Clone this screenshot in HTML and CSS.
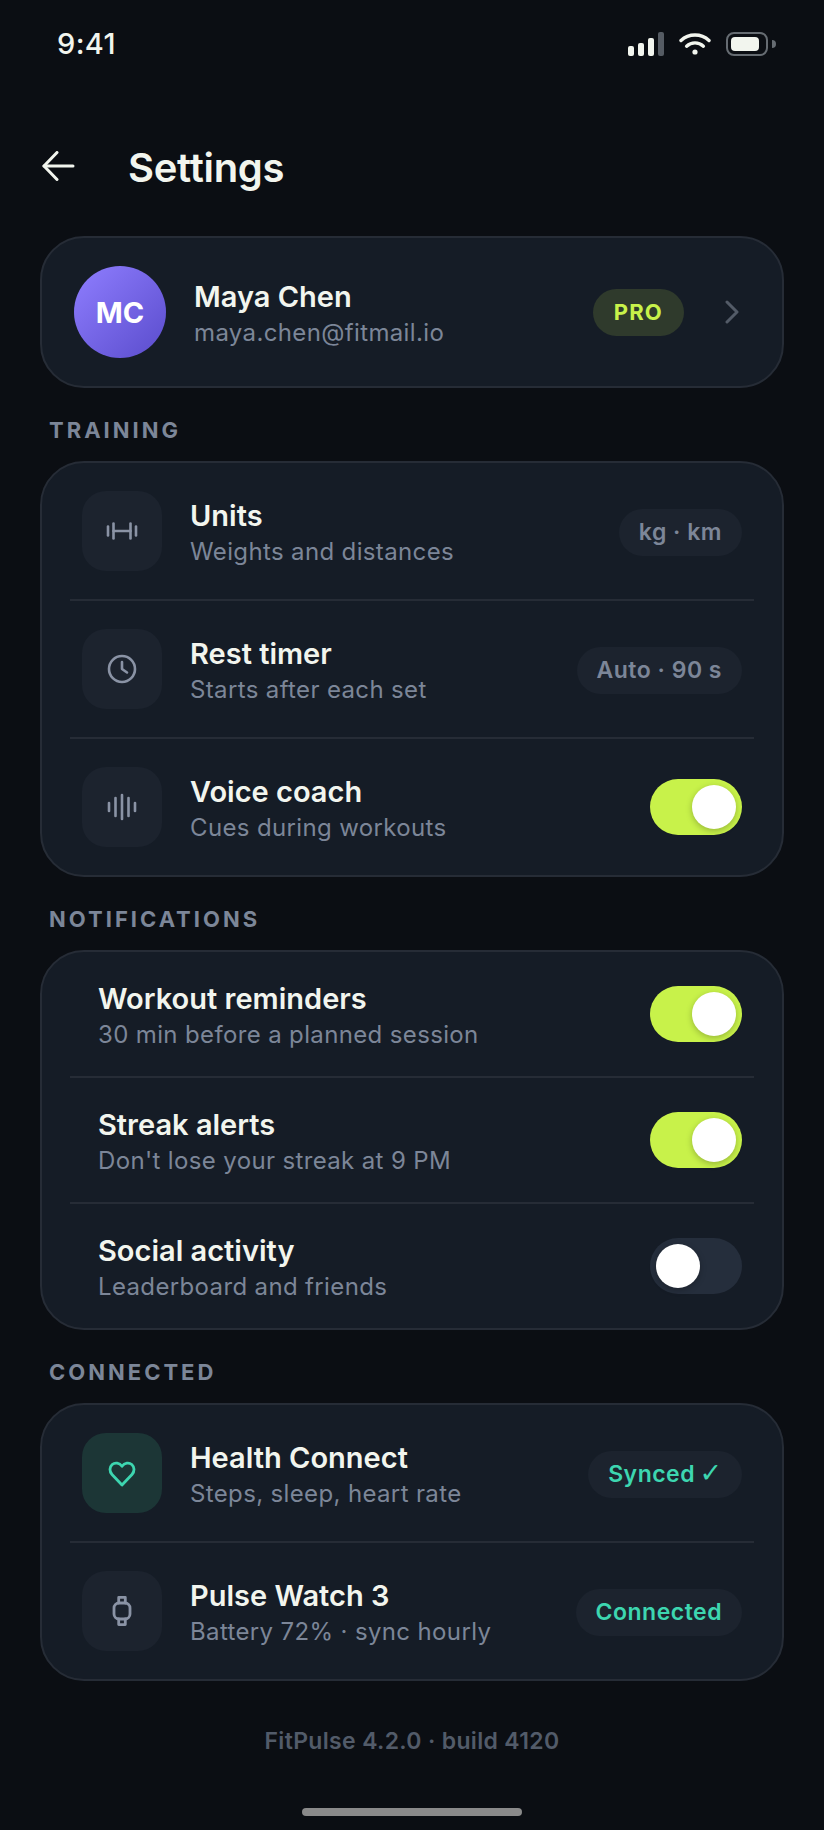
FILE: index.html
```html
<!DOCTYPE html>
<html lang="en">
<head>
    <meta charset="UTF-8">
    <meta name="viewport" content="width=device-width, initial-scale=1.0">
    <title>Settings</title>
    <link rel="stylesheet" href="styles.css">
</head>
<body>
    <div class="screen">
        <!-- Status bar -->
        <div class="status-bar">
            <span class="time">9:41</span>
            <div class="status-icons">
                <div class="signal">
                    <span class="bar bar-1"></span>
                    <span class="bar bar-2"></span>
                    <span class="bar bar-3"></span>
                    <span class="bar bar-4"></span>
                </div>
                <svg class="wifi" width="32" height="24" viewBox="0 0 32 24" fill="none" stroke="#f2f5ee" stroke-width="3.4" stroke-linecap="round">
                    <path d="M2 8.500C9.800 1.200 22.200 1.200 30 8.500"/>
                    <path d="M7.600 14.200C12.400 9.800 19.600 9.800 24.400 14.200"/>
                    <circle cx="16" cy="20" r="2.600" fill="#f2f5ee" stroke="none"/>
                </svg>
                <div class="battery"><span class="battery-fill"></span></div>
                <span class="battery-nub"></span>
            </div>
        </div>

        <!-- Header -->
        <div class="header">
            <svg class="back" width="34" height="30" viewBox="0 0 34 30" fill="none" stroke="#f2f5ee" stroke-width="3" stroke-linecap="round" stroke-linejoin="round">
                <path d="M31 15H2"/>
                <path d="M15 1.500L2 15l13 13.500"/>
            </svg>
            <h1>Settings</h1>
        </div>

        <!-- Profile -->
        <div class="card profile">
            <div class="avatar">MC</div>
            <div class="row-text">
                <div class="row-title">Maya Chen</div>
                <div class="row-sub">maya.chen@fitmail.io</div>
            </div>
            <span class="pro-badge">PRO</span>
            <svg class="chevron" width="14" height="24" viewBox="0 0 14 24" fill="none" stroke="#535b67" stroke-width="3" stroke-linecap="round" stroke-linejoin="round">
                <path d="M2 2l10 10L2 22"/>
            </svg>
        </div>

        <div class="section-label">TRAINING</div>
        <div class="card list">
            <div class="row tall">
                <div class="icon-box">
                    <svg width="32" height="32" viewBox="0 0 32 32" fill="none" stroke="#8a93a5" stroke-width="2.600" stroke-linecap="round">
                        <path d="M2 11.500v9"/>
                        <path d="M7.500 8.500v15"/>
                        <path d="M7.500 16h17"/>
                        <path d="M24.500 8.500v15"/>
                        <path d="M30 11.500v9"/>
                    </svg>
                </div>
                <div class="row-text">
                    <div class="row-title">Units</div>
                    <div class="row-sub">Weights and distances</div>
                </div>
                <span class="pill">kg · km</span>
            </div>
            <div class="row tall">
                <div class="icon-box">
                    <svg width="32" height="32" viewBox="0 0 32 32" fill="none" stroke="#8a93a5" stroke-width="2.600" stroke-linecap="round" stroke-linejoin="round">
                        <circle cx="16" cy="16" r="13"/>
                        <path d="M16 9v7l5 3.500"/>
                    </svg>
                </div>
                <div class="row-text">
                    <div class="row-title">Rest timer</div>
                    <div class="row-sub">Starts after each set</div>
                </div>
                <span class="pill">Auto · 90 s</span>
            </div>
            <div class="row tall">
                <div class="icon-box">
                    <svg width="32" height="32" viewBox="0 0 32 32" fill="none" stroke="#8a93a5" stroke-width="2.600" stroke-linecap="round">
                        <path d="M3 12v8"/>
                        <path d="M9.500 7v18"/>
                        <path d="M16 4v24"/>
                        <path d="M22.500 7v18"/>
                        <path d="M29 12v8"/>
                    </svg>
                </div>
                <div class="row-text">
                    <div class="row-title">Voice coach</div>
                    <div class="row-sub">Cues during workouts</div>
                </div>
                <div class="toggle on"><span class="knob"></span></div>
            </div>
        </div>

        <div class="section-label">NOTIFICATIONS</div>
        <div class="card list">
            <div class="row short">
                <div class="row-text">
                    <div class="row-title">Workout reminders</div>
                    <div class="row-sub">30 min before a planned session</div>
                </div>
                <div class="toggle on"><span class="knob"></span></div>
            </div>
            <div class="row short">
                <div class="row-text">
                    <div class="row-title">Streak alerts</div>
                    <div class="row-sub">Don't lose your streak at 9 PM</div>
                </div>
                <div class="toggle on"><span class="knob"></span></div>
            </div>
            <div class="row short">
                <div class="row-text">
                    <div class="row-title">Social activity</div>
                    <div class="row-sub">Leaderboard and friends</div>
                </div>
                <div class="toggle"><span class="knob"></span></div>
            </div>
        </div>

        <div class="section-label">CONNECTED</div>
        <div class="card list">
            <div class="row tall">
                <div class="icon-box teal">
                    <svg width="32" height="32" viewBox="0 0 32 32" fill="none" stroke="#3dd6b0" stroke-width="2.800" stroke-linecap="round" stroke-linejoin="round">
                        <path d="M16 28L6 17.500C3.200 14.500 3.400 10 6.200 7.500C9 5.100 13.400 5.700 16 9.300C18.600 5.700 23 5.100 25.800 7.500C28.600 10 28.800 14.500 26 17.500L16 28Z"/>
                    </svg>
                </div>
                <div class="row-text">
                    <div class="row-title">Health Connect</div>
                    <div class="row-sub">Steps, sleep, heart rate</div>
                </div>
                <span class="pill green">Synced <span class="check">✓</span></span>
            </div>
            <div class="row tall">
                <div class="icon-box">
                    <svg width="32" height="32" viewBox="0 0 32 32" fill="none" stroke="#8a93a5" stroke-width="2.800" stroke-linecap="round" stroke-linejoin="round">
                        <rect x="8" y="8" width="16" height="16" rx="5"/>
                        <path d="M12.700 8V2.400h6.600V8"/>
                        <path d="M12.700 24v5.600h6.600V24"/>
                    </svg>
                </div>
                <div class="row-text">
                    <div class="row-title">Pulse Watch 3</div>
                    <div class="row-sub">Battery 72% · sync hourly</div>
                </div>
                <span class="pill green">Connected</span>
            </div>
        </div>

        <div class="footer">FitPulse 4.2.0 · build 4120</div>
        <div class="home-indicator"></div>
    </div>
</body>
</html>
```

FILE: styles.css
```css
* {
    box-sizing: border-box;
}

body {
    margin: 0;
    background-color: #0b0e13;
    color: #f2f5ee;
    font-family: Inter, "Liberation Sans", sans-serif;
}

.screen {
    width: 824px;
    height: 1830px;
    padding: 0 40px;
    overflow: hidden;
}

/* Status bar */
.status-bar {
    display: flex;
    justify-content: space-between;
    align-items: center;
    height: 88px;
    padding: 0 8px 0 17px;
}

.time {
    font-size: 29px;
    font-weight: 500;
    letter-spacing: 0.4px;
    line-height: 90px;
}

.status-icons {
    display: flex;
    align-items: center;
}

.signal {
    display: flex;
    align-items: flex-end;
    gap: 4px;
    height: 24px;
    margin-right: 15px;
}

.bar {
    width: 6px;
    background-color: #f2f5ee;
    border-radius: 2px;
}

.bar-1 { height: 10px; }
.bar-2 { height: 13px; }
.bar-3 { height: 18px; }
.bar-4 { height: 24px; background-color: #555b63; }

.wifi {
    margin-right: 15px;
}

.battery {
    width: 42px;
    height: 24px;
    padding: 3px;
    border: 2px solid #666c72;
    border-radius: 8px;
}

.battery-fill {
    display: block;
    width: 28px;
    height: 100%;
    background-color: #f2f5ee;
    border-radius: 4px;
}

.battery-nub {
    width: 4px;
    height: 8px;
    margin-left: 4px;
    background-color: #666c72;
    border-radius: 0 4px 4px 0;
}

/* Header */
.header {
    display: flex;
    align-items: center;
    gap: 52px;
    height: 148px;
    padding-top: 8px;
    margin-left: 2px;
}

h1 {
    margin: 0;
    padding-top: 2px;
    font-size: 40px;
    font-weight: 600;
    letter-spacing: -0.3px;
}

/* Cards */
.card {
    background-color: #151c26;
    border: 2px solid #262c36;
    border-radius: 44px;
}

.profile {
    display: flex;
    align-items: center;
    height: 152px;
    padding: 0 43px 0 32px;
}

.avatar {
    display: flex;
    justify-content: center;
    align-items: center;
    flex-shrink: 0;
    width: 92px;
    height: 92px;
    margin-right: 28px;
    border-radius: 50%;
    background: linear-gradient(135deg, #8f7eff, #5a4ccc);
    color: #fff;
    font-size: 29px;
    font-weight: 700;
}

.pro-badge {
    padding: 0 21px;
    line-height: 47px;
    margin-right: 41px;
    border-radius: 24px;
    background-color: #2f3a2c;
    color: #c8f24a;
    font-size: 22px;
    font-weight: 700;
    letter-spacing: 1.2px;
}

.section-label {
    height: 73px;
    padding: 12px 9px 0;
    color: #7c8698;
    font-size: 22px;
    font-weight: 700;
    letter-spacing: 3px;
    line-height: 60px;
}

.list {
    padding: 0 28px;
}

.row {
    display: flex;
    align-items: center;
    padding: 0 12px;
    border-top: 2px solid #262c36;
}

.row:first-child {
    border-top: none;
}

.tall {
    height: 138px;
}

.tall:first-child {
    height: 136px;
}

.short {
    height: 126px;
    padding-left: 28px;
}

.short:first-child {
    height: 124px;
}

.icon-box {
    display: flex;
    justify-content: center;
    align-items: center;
    flex-shrink: 0;
    width: 80px;
    height: 80px;
    margin-right: 28px;
    border-radius: 24px;
    background-color: #1c232e;
}

.icon-box.teal {
    background-color: #1c3636;
}

.row-text {
    flex: 1;
    min-width: 0;
    padding-top: 4px;
}

.row-title {
    font-size: 29px;
    font-weight: 600;
    line-height: 38px;
}

.row-sub {
    color: #7c8698;
    font-size: 24px;
    line-height: 34px;
    letter-spacing: 0.36px;
}

.pill {
    margin-top: 2px;
    padding: 0 20px;
    line-height: 47px;
    border-radius: 24px;
    background-color: #1c232e;
    color: #7c8698;
    font-size: 23px;
    font-weight: 600;
    letter-spacing: 0.5px;
}

.pill.green {
    color: #3dd6b0;
}

.check {
    margin-left: -2px;
    font-family: "DejaVu Sans", sans-serif;
    font-size: 27px;
    font-weight: 700;
    line-height: 1;
    letter-spacing: 0;
}

/* Toggles */
.toggle {
    display: flex;
    align-items: center;
    width: 92px;
    height: 56px;
    padding: 0 6px;
    border-radius: 28px;
    background-color: #252e3c;
}

.toggle.on {
    justify-content: flex-end;
    background-color: #c8f24a;
}

.knob {
    width: 44px;
    height: 44px;
    border-radius: 50%;
    background-color: #fff;
    box-shadow: 0 2px 6px rgba(0, 0, 0, 0.25);
}

/* Footer */
.footer {
    margin-top: 46px;
    color: #525b69;
    font-size: 23px;
    font-weight: 600;
    letter-spacing: 0.33px;
    line-height: 28px;
    text-align: center;
}

.home-indicator {
    width: 220px;
    height: 8px;
    margin: 53px auto 0;
    border-radius: 4px;
    background-color: #8a8a8a;
}
```
